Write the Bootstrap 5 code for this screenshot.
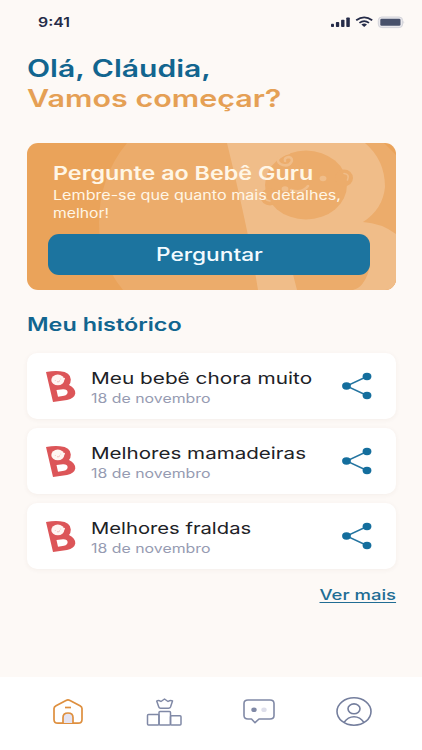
<!DOCTYPE html>
<html lang="pt-BR">
<head>
<meta charset="utf-8">
<meta name="viewport" content="width=device-width, initial-scale=1">
<title>Bebê Guru</title>
<link href="https://cdn.jsdelivr.net/npm/bootstrap@5.3.0/dist/css/bootstrap.min.css" rel="stylesheet">
<style>
body{background:#fdf9f6;font-family:Inter,"Open Sans",sans-serif;height:750px;overflow:hidden}
.screen{width:422px;height:750px}
.wide{display:inline-block;transform:scaleX(var(--sx,1.26));transform-origin:0 50%;white-space:nowrap}
.mid{transform-origin:50% 50%}
.end{transform-origin:100% 50%;--sx:1.275}
.status{height:44px;padding:1px 17px 0 38px;color:#252b48}
.clock{font-size:13px;font-weight:600;--sx:1.22}
.main{padding:10px 26px 0 27px}
.hello{font-size:24px;line-height:30px;font-weight:600;color:#12658f;margin:0}
.hello .first{--sx:1.252}
.hello .second{color:#e5a055;--sx:1.27}
.hero{height:147px;margin-top:29px;border-radius:11px;background:#eaa35a;padding:18px 26px 14px 21px;color:#fff6e6}
.hero-art{position:absolute;inset:0;width:100%;height:100%}
.hero-copy{padding-left:5px;height:73px}
.hero-title{font-size:18.5px;line-height:24px;font-weight:600;margin:0}
.hero-text{font-size:13px;line-height:17.6px;margin:0;padding-top:2px}
.hero-text .wide{--sx:1.24}
.hero-text .short{--sx:1.21}
.ask{height:41px;border-radius:11px;background:#1c749f;color:#f3fbff;font-size:18px;font-weight:500;line-height:1}
.ask:hover{background:#17648a;color:#fff}
.section{font-size:18px;line-height:24px;font-weight:600;color:#12658f;margin:23px 0 16px;--sx:1.3}
.entry{height:66px;border-radius:10px;background:#fff;box-shadow:0 1px 5px rgba(90,60,40,.055);padding:0 24px 0 19px}
.entries{gap:9px}
.entry-title{font-size:16.5px;line-height:21px;color:#202126}
.entry-date{font-size:12.5px;line-height:19px;color:#969bb2}
.entry-copy{padding-left:15px;padding-top:4px}
.entry-date .wide{--sx:1.27}
.second-title{--sx:1.247}
.third-title{--sx:1.225}
.more{font-size:14.5px;line-height:20px;font-weight:500;color:#216d94;margin-top:16px}
.more a{color:inherit;text-underline-offset:2px;text-decoration-thickness:1px}
.tabs{height:73px;background:#fff;padding:0 50px 4px 52px}
svg{display:block;flex:none}
</style>
<script src="https://cdn.jsdelivr.net/npm/bootstrap@5.3.0/dist/js/bootstrap.bundle.min.js"></script>
</head>
<body>
<svg width="0" height="0" class="position-absolute">
<defs>
<symbol id="logo" viewBox="0 0 30 32">
<path fill="#dc5558" fill-rule="evenodd" d="M0 2Q8 .5 14 1.200Q24.500 2 24.800 9.500Q24.800 13 23 15Q29.500 18 29.300 23.500Q28.500 28.300 21 30L7 32ZM10.500 20L12 26.700L18 25.700Q21.800 24.800 21.600 22Q21.300 19 17 19.200Z"/>
<ellipse cx="11.800" cy="9.900" rx="6.500" ry="5.300" fill="#fff5f2"/>
<circle cx="18" cy="8.800" r="1" fill="#fff5f2"/>
<path d="M11 11.800Q13 12.300 14 10.500" fill="none" stroke="#eca5a3" stroke-width=".7"/>
<circle cx="9.200" cy="10.500" r=".45" fill="#eca5a3"/><circle cx="14.800" cy="9" r=".45" fill="#eca5a3"/>
</symbol>
<symbol id="share" viewBox="0 0 30 28">
<path d="M25 4.500L4.500 14L25 23.500" fill="none" stroke="#2474a0" stroke-width="1.400"/>
<g fill="#146e9d"><ellipse cx="25" cy="4.500" rx="4.400" ry="3.700"/><ellipse cx="4.500" cy="14" rx="4.400" ry="3.700"/><ellipse cx="25" cy="23.500" rx="4.400" ry="3.700"/></g>
</symbol>
</defs>
</svg>
<div class="screen d-flex flex-column">
<header class="status d-flex align-items-center justify-content-between">
<span class="wide clock">9:41</span>
<svg width="76" height="14" viewBox="0 0 76 14">
<g fill="#252b48"><rect x="2" y="7.800" width="3" height="3.200" rx=".8"/><rect x="6.900" y="6" width="3.300" height="5" rx=".8"/><rect x="12.100" y="3.800" width="3.400" height="7.200" rx=".8"/><rect x="17.300" y="1.500" width="3.500" height="9.500" rx=".8"/></g>
<g fill="none" stroke="#252b48" stroke-width="1.800"><path d="M27.200 4.300Q35.200-1.700 43.200 4.300M30.400 6.900Q35.200 3.300 40 6.900"/></g>
<path d="M32.400 8.500Q35.200 6.700 38 8.500L35.200 10.900Z" fill="#252b48"/>
<rect x="49.300" y="1" width="24.300" height="10.600" rx="3.500" fill="#e9e8ec" stroke="#d3d3da" stroke-width="1"/>
<rect x="51.300" y="2.800" width="20.200" height="7" rx="1.300" fill="#48516b"/>
<path d="M74.500 4.800Q76 6.300 74.500 7.900Z" fill="#cbccd4"/>
</svg>
</header>
<main class="main flex-grow-1">
<h1 class="hello"><span class="wide first">Olá, Cláudia,</span><br><span class="wide second">Vamos começar?</span></h1>
<section class="hero position-relative overflow-hidden">
<svg class="hero-art" viewBox="0 0 369 147" preserveAspectRatio="none">
<path fill="#ecac6b" d="M100 0Q72 34 72 80Q72 118 96 147H369V12L357 0Z"/>
<path fill="#f0bd89" d="M200 0H338Q358 17 358 44Q356 66 336 79Q354 80 369 91V147H231Q222 90 200 0Z"/>
<path fill="#ecac6b" d="M258 100H330Q351 119 336 140Q333 145 326 147H270Z"/>
<g fill="#ecac6b"><ellipse cx="279" cy="42" rx="41" ry="34.500"/><ellipse cx="243" cy="54" rx="9.500" ry="8.500"/><ellipse cx="317" cy="35" rx="9" ry="8.500"/></g>
<g fill="none" stroke="#f0bd89" stroke-width="2.600" stroke-linecap="round"><path d="M262 10C249 12 248 20 256 22C264 24 268 15 262 14C259 14 257 16 258 18M264 47Q275 51 281 43"/><path stroke-width="1.600" d="M317 30.500Q323 31 320.500 37M239 51Q236 57 243 58"/></g>
<ellipse cx="296" cy="35.500" rx="3.400" ry="2.800" fill="#f0bd89"/><ellipse cx="258" cy="46" rx="3.400" ry="2.800" fill="#f0bd89"/>
</svg>
<div class="position-relative">
<div class="hero-copy">
<h2 class="hero-title"><span class="wide">Pergunte ao Bebê Guru</span></h2>
<p class="hero-text"><span class="wide">Lembre-se que quanto mais detalhes,</span><br><span class="wide short">melhor!</span></p>
</div>
<button class="btn ask w-100 border-0 p-0" type="button"><span class="wide mid">Perguntar</span></button>
</div>
</section>
<h2 class="section"><span class="wide">Meu histórico</span></h2>
<div class="entries d-flex flex-column">
<article class="entry d-flex align-items-center"><svg width="30" height="32"><use href="#logo"/></svg><div class="entry-copy flex-grow-1"><div class="entry-title"><span class="wide">Meu bebê chora muito</span></div><div class="entry-date"><span class="wide">18 de novembro</span></div></div><svg width="30" height="28"><use href="#share"/></svg></article>
<article class="entry d-flex align-items-center"><svg width="30" height="32"><use href="#logo"/></svg><div class="entry-copy flex-grow-1"><div class="entry-title"><span class="wide second-title">Melhores mamadeiras</span></div><div class="entry-date"><span class="wide">18 de novembro</span></div></div><svg width="30" height="28"><use href="#share"/></svg></article>
<article class="entry d-flex align-items-center"><svg width="30" height="32"><use href="#logo"/></svg><div class="entry-copy flex-grow-1"><div class="entry-title"><span class="wide third-title">Melhores fraldas</span></div><div class="entry-date"><span class="wide">18 de novembro</span></div></div><svg width="30" height="28"><use href="#share"/></svg></article>
</div>
<div class="more text-end"><a href="#" class="wide end">Ver mais</a></div>
</main>
<nav class="tabs d-flex align-items-center justify-content-between">
<svg width="32" height="30" viewBox="0 0 32 30" fill="none" stroke="#de8f3e" stroke-width="1.700"><path d="M2 11.500Q2 9.800 4 8.700L14 3.400Q16 2.300 18 3.400L28 8.700Q30 9.800 30 11.500V22.500Q30 26.200 26 26.200H6Q2 26.200 2 22.500Z"/><path d="M11 26V20.500Q11 16 16 16Q21 16 21 20.500V26" fill="#e4e3f1"/><path d="M13 10.500H19"/></svg>
<svg width="40" height="30" viewBox="-3.500 0 40 30" fill="none" stroke="#8089a6" stroke-width="1.500" stroke-linejoin="round"><rect x="1" y="17.500" width="11.500" height="10.500" rx="1"/><rect x="12.500" y="14.500" width="11.500" height="13.500" rx="1"/><rect x="24" y="18.800" width="10.500" height="9.200" rx="1"/><path d="M12.300 10L10.200 4Q12 2.700 14.500 4.500L18 2L21.500 4.500Q24 2.700 26 4L24 10Q23.500 11.300 22 11.300H14Q12.700 11.300 12.300 10Z"/></svg>
<svg width="34" height="30" viewBox="1 0 34 30" fill="none" stroke="#8089a6" stroke-width="1.600"><path d="M6 3H28Q32 3 32 6.500V18.500Q32 22 28 22H17L13 25.700L9.500 22H6Q2 22 2 18.500V6.500Q2 3 6 3Z" stroke-linejoin="round"/><ellipse cx="12" cy="12.800" rx="2.700" ry="2.300" fill="#8089a6" stroke="none"/><ellipse cx="22" cy="12.800" rx="2.700" ry="2.300" fill="#dedfeb" stroke="none"/></svg>
<svg width="36" height="30" viewBox="0 0 36 30" fill="none" stroke="#747e9d" stroke-width="1.600"><ellipse cx="18" cy="14.500" rx="17" ry="13.700"/><ellipse cx="18" cy="11.800" rx="6" ry="4.900"/><path d="M8 25.500Q12 19.800 18 19.800Q24 19.800 28 25.500"/></svg>
</nav>
</div>
</body>
</html>
